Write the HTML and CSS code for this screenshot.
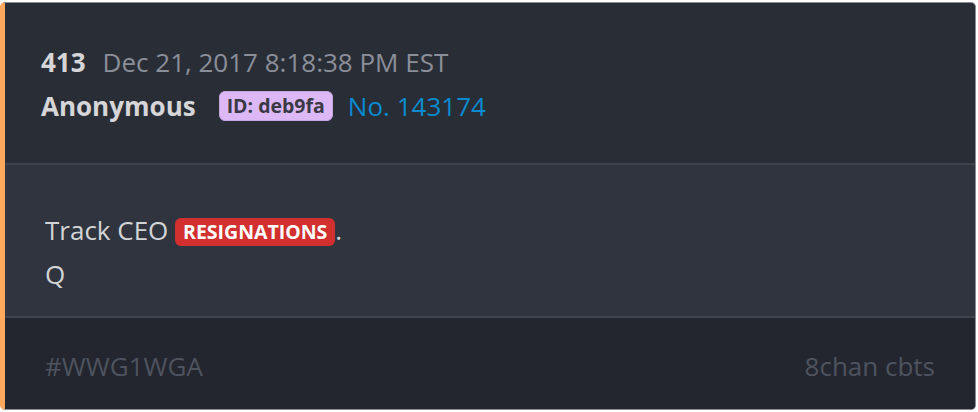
FILE: index.html
```html
<!DOCTYPE html>
<html lang="en">
<head>
    <meta charset="UTF-8">
    <title>Post 413</title>
    <link rel="stylesheet" href="styles.css">
</head>
<body>

    <article class="post">
        <header class="post-header">
            <div class="meta-line">
                <span class="post-count">413</span>
                <span class="post-date">Dec 21, 2017 8:18:38 PM EST</span>
            </div>
            <div class="meta-line">
                <span class="author">Anonymous</span>
                <span class="poster-id">ID: deb9fa</span>
                <a class="post-number" href="#">No. 143174</a>
            </div>
        </header>

        <div class="post-body">
            <p>Track CEO <span class="highlight">RESIGNATIONS</span>.</p>
            <p>Q</p>
        </div>

        <footer class="post-footer">
            <span class="tag">#WWG1WGA</span>
            <span class="source">8chan cbts</span>
        </footer>
    </article>

</body>
</html>
```

FILE: styles.css
```css
body {
    margin: 0;
    padding: 2px 2px 2px 0;
    background: #ffffff;
    font-family: "Open Sans", "Noto Sans", sans-serif;
    font-size: 26px;
}
.post {
    border: 1px solid #8a8d94;
    border-left: 5px solid #fca95e;
    border-radius: 5px;
    overflow: hidden;
    background: #292d36;
}
.post-header {
    padding: 37px 36px 35px;
    border-bottom: 2px solid #3e434d;
}
.meta-line {
    display: flex;
    align-items: center;
    height: 44px;
}
.post-count {
    font-weight: bold;
    color: #d6d6d8;
    margin-right: 17px;
}
.post-date {
    color: #8b8f9a;
}
.author {
    font-weight: bold;
    color: #d6d6d8;
    margin-right: 23px;
}
.poster-id {
    background: #dcb9f6;
    color: #3a3944;
    font-size: 19.5px;
    font-weight: bold;
    line-height: 28px;
    padding: 0 7px;
    border: 1px solid #c9a5e3;
    border-radius: 6px;
    margin-right: 15px;
}
.post-number {
    color: #0a8bd0;
    text-decoration: none;
}
.post-body {
    background: #2f343e;
    padding: 43px 40px 20px;
    border-bottom: 2px solid #3e434d;
    color: #d3d4d6;
}
.post-body p {
    margin: 0;
    line-height: 44px;
}
.highlight {
    display: inline-block;
    background: #d1302e;
    color: #ffffff;
    font-size: 19.5px;
    font-weight: bold;
    line-height: 28px;
    padding: 0 8px;
    border-radius: 6px;
    vertical-align: 1px;
}
.post-footer {
    background: #23262e;
    display: flex;
    justify-content: space-between;
    align-items: center;
    padding: 26px 40px 21px;
    height: 44px;
    color: #4e535f;
}
```
